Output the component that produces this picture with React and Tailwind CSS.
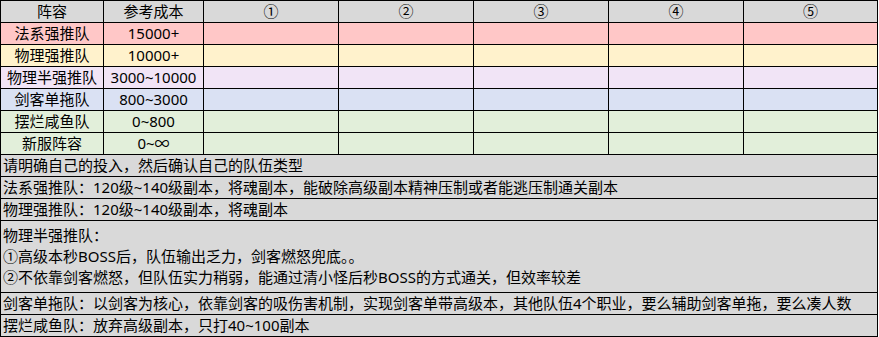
import React from "react";

const rows = [
  { name: "法系强推队", cost: "15000+", bg: "bg-[#ffc7c7]" },
  { name: "物理强推队", cost: "10000+", bg: "bg-[#fff2cc]" },
  { name: "物理半强推队", cost: "3000~10000", bg: "bg-[#f1e4f6]" },
  { name: "剑客单拖队", cost: "800~3000", bg: "bg-[#dae1f3]" },
  { name: "摆烂咸鱼队", cost: "0~800", bg: "bg-[#e2efda]" },
  { name: "新服阵容", cost: "0~∞", bg: "bg-[#e2efda]" },
];

const cell = "border-r border-b border-black h-[22px] flex items-center justify-center whitespace-nowrap overflow-hidden";
const line = "border-r border-b border-black h-[22px] flex items-center pl-[2px] whitespace-nowrap overflow-hidden bg-[#d9d9d9]";

export default function App() {
  return (
    <div
      className="w-[879px] h-[337px] bg-white text-black text-[15px] leading-[21px]"
      style={{ fontFamily: '"Noto Sans", "Noto Sans CJK SC", sans-serif' }}
    >
      <div className="w-[878px] border-l border-t border-black">
        <div className="grid grid-cols-[103px_100px_135px_135px_135px_135px_134px]">
          <div className={`${cell} bg-[#d9d9d9]`}>阵容</div>
          <div className={`${cell} bg-[#d9d9d9]`}>参考成本</div>
          {["①", "②", "③", "④", "⑤"].map((c) => (
            <div key={c} className={`${cell} bg-[#d9d9d9]`}>{c}</div>
          ))}
          {rows.map((r) => (
            <React.Fragment key={r.name}>
              <div className={`${cell} ${r.bg}`}>{r.name}</div>
              <div className={`${cell} ${r.bg}`}>{r.cost}</div>
              <div className={`${cell} ${r.bg}`}></div>
              <div className={`${cell} ${r.bg}`}></div>
              <div className={`${cell} ${r.bg}`}></div>
              <div className={`${cell} ${r.bg}`}></div>
              <div className={`${cell} ${r.bg}`}></div>
            </React.Fragment>
          ))}
        </div>
        <div className={line}>请明确自己的投入，然后确认自己的队伍类型</div>
        <div className={line}>法系强推队：120级~140级副本，将魂副本，能破除高级副本精神压制或者能逃压制通关副本</div>
        <div className={line}>物理强推队：120级~140级副本，将魂副本</div>
        <div className="border-r border-b border-black h-[72px] flex flex-col justify-center pl-[2px] whitespace-nowrap bg-[#d9d9d9]">
          <div>物理半强推队：</div>
          <div>①高级本秒BOSS后，队伍输出乏力，剑客燃怒兜底。。</div>
          <div>②不依靠剑客燃怒，但队伍实力稍弱，能通过清小怪后秒BOSS的方式通关，但效率较差</div>
        </div>
        <div className={line}>剑客单拖队：以剑客为核心，依靠剑客的吸伤害机制，实现剑客单带高级本，其他队伍4个职业，要么辅助剑客单拖，要么凑人数</div>
        <div className={line}>摆烂咸鱼队：放弃高级副本，只打40~100副本</div>
      </div>
    </div>
  );
}
